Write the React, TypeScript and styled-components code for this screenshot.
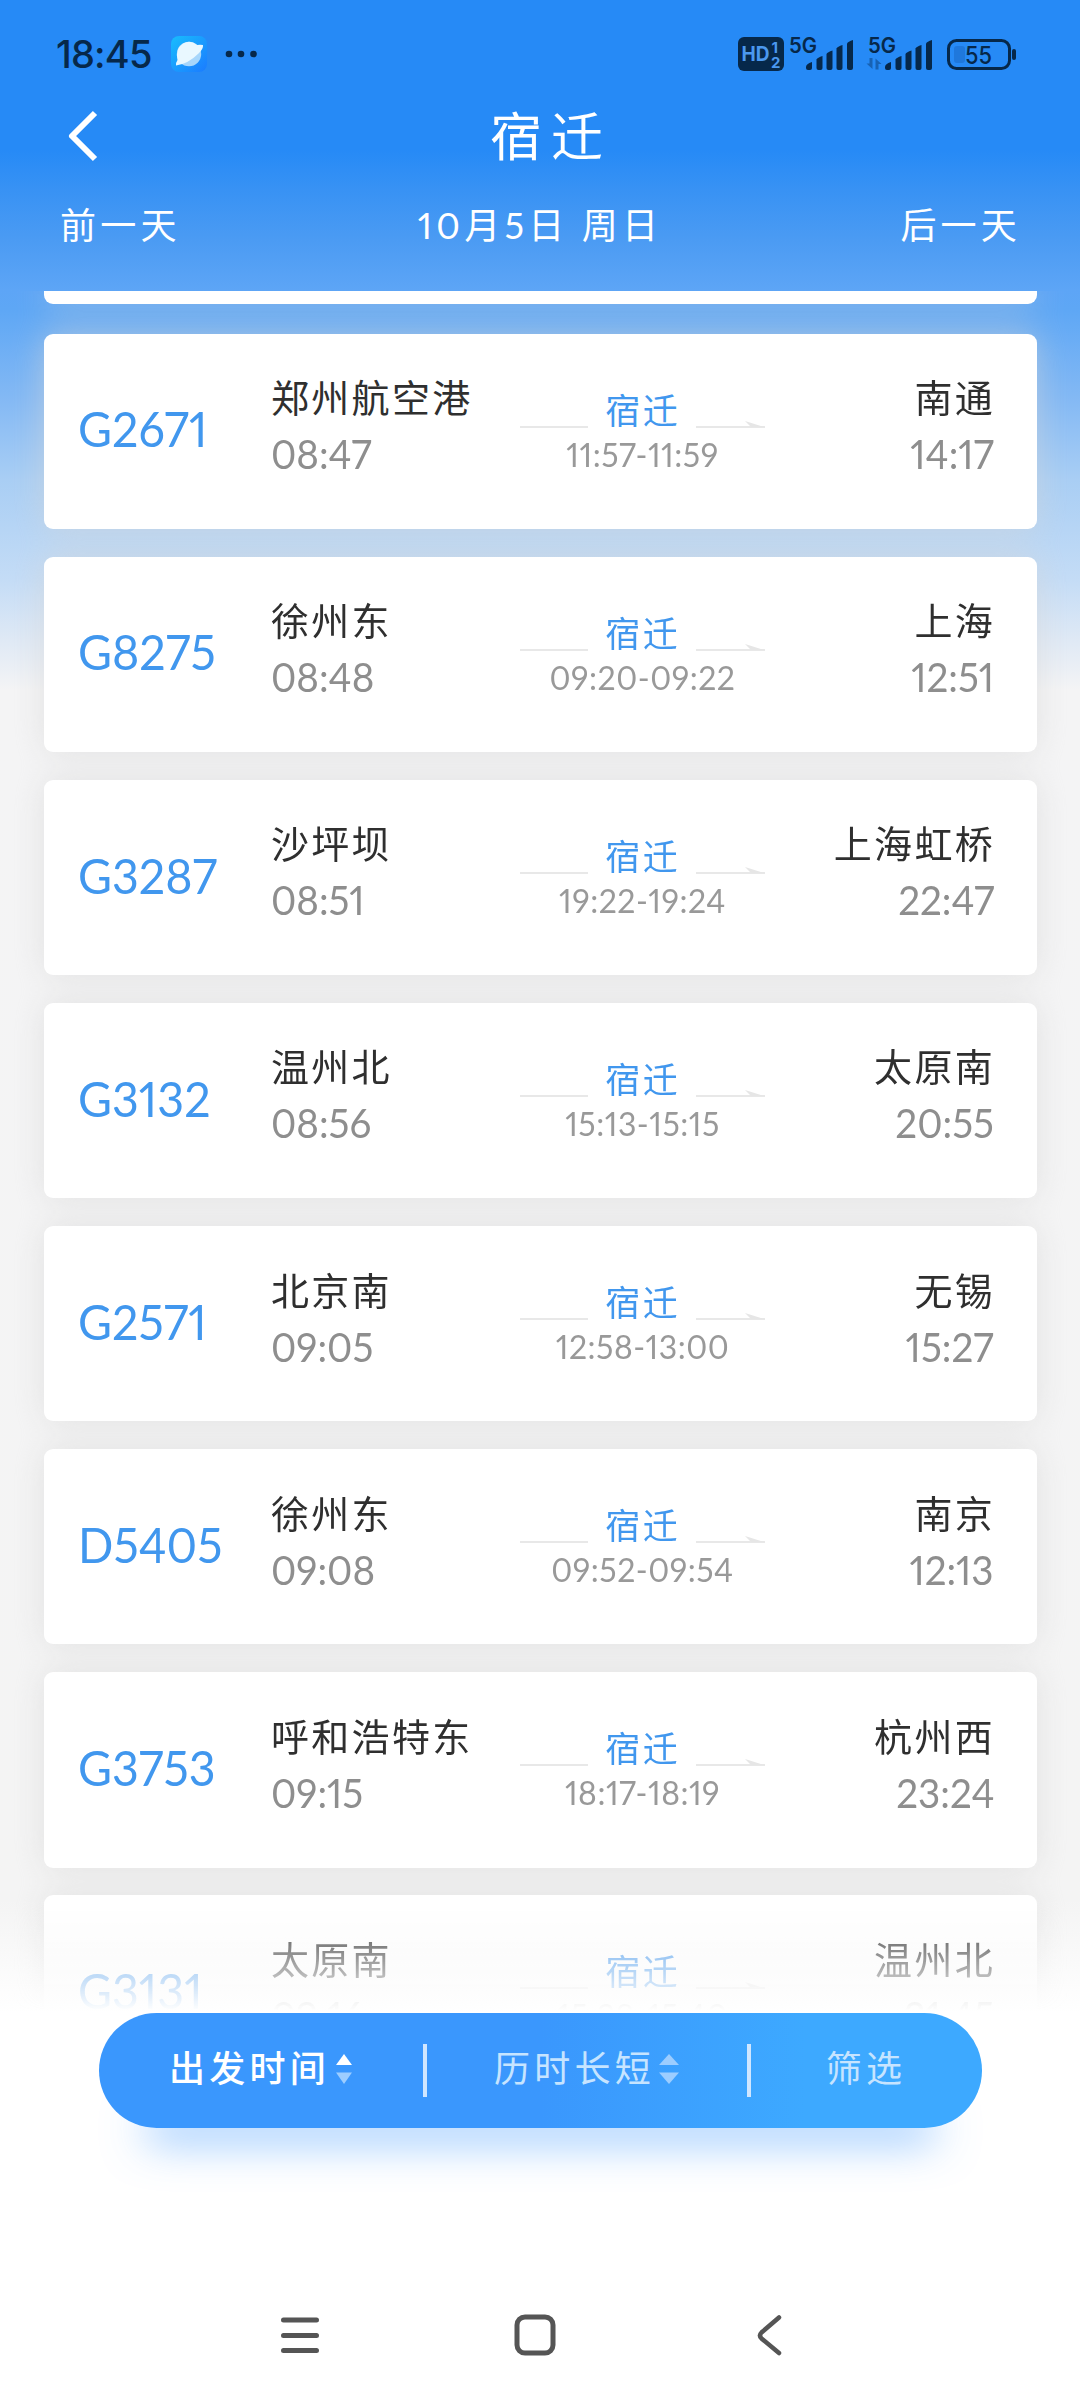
import React from "react";
import styled, { createGlobalStyle } from "styled-components";

const CJK = `"Noto Sans CJK SC", sans-serif`;

const GlobalStyle = createGlobalStyle`
  *, *::before, *::after { box-sizing: border-box; }
  body { margin: 0; background: #fff; }
  svg { display: block; flex: none; overflow: visible; }
`;

const Screen = styled.div`
  width: 1080px;
  height: 2400px;
  overflow: hidden;
  display: flex;
  flex-direction: column;
  font-family: Lato, ${CJK};
  font-feature-settings: "pnum" 1, "lnum" 1;
  background: linear-gradient(
    180deg,
    #268af6 0, #268af6 150px, #3892f4 190px, #4b9bf3 240px, #5da5f6 290px,
    #5ea7f5 310px, #84b9f4 400px, #a9cef4 480px, #c4dcf6 580px, #dfe9f5 640px, #f4f4f5 690px,
    #f4f4f4 1900px, #fff 2013px
  );
`;

const StatusBar = styled.div`
  display: flex;
  align-items: center;
  justify-content: space-between;
  height: 108px;
  padding: 0 63px 0 56px;
  color: #06284a;
`;

const StatusGroup = styled.div<{ $gap: number }>`
  display: flex;
  align-items: center;
  gap: ${(p) => p.$gap}px;
`;

const Clock = styled.span`
  width: 97px;
  font: 500 38px/1 Inter, sans-serif;
  letter-spacing: -0.8px;
  white-space: nowrap;
`;

const TitleBar = styled.div`
  display: grid;
  grid-template-columns: 1fr auto 1fr;
  align-items: center;
  height: 56px;
  padding: 0 65px;
`;

const Title = styled.h1`
  margin: -5px -9px 0 13px;
  font: 400 52px/56px ${CJK};
  letter-spacing: 9px;
  color: #fff;
`;

const DayBar = styled.div`
  display: grid;
  grid-template-columns: 1fr auto 1fr;
  align-items: center;
  height: 127px;
  padding: 0 60px 10px;
  color: #fff;
  font-size: 36px;
  letter-spacing: 4.2px;
`;

const Day = styled.span<{ $end?: boolean }>`
  justify-self: ${(p) => (p.$end ? "end" : "start")};
  margin-right: ${(p) => (p.$end ? "-1px" : "0")};
  white-space: pre;
`;

const Results = styled.div`
  height: 1722px;
  overflow: hidden;
  -webkit-mask-image: linear-gradient(#000 1610px, transparent 1720px);
  mask-image: linear-gradient(#000 1610px, transparent 1720px);
`;

const CardList = styled.div`
  display: flex;
  flex-direction: column;
  gap: 27.8px;
  padding: 0 43px 0 44px;
  filter: drop-shadow(0 0 16px rgba(214, 214, 214, 0.6));
`;

const CardTail = styled.div`
  height: 12.5px;
  margin-bottom: 2.4px;
  border-radius: 0 0 9px 9px;
  background: #fff;
`;

const Card = styled.div`
  flex: none;
  display: grid;
  grid-template-columns: 193px 249px 245px 1fr;
  height: 195.3px;
  padding: 0 43px 0 34px;
  border-radius: 9px;
  background: #fff;
`;

const TrainNo = styled.div`
  align-self: center;
  justify-self: start;
  padding-bottom: 4px;
  font-size: 48px;
  line-height: 56px;
  transform: scaleX(0.97);
  transform-origin: left;
  color: #4197ee;
`;

const Stop = styled.div<{ $end?: boolean }>`
  display: flex;
  flex-direction: column;
  align-items: ${(p) => (p.$end ? "flex-end" : "flex-start")};
  padding-top: 34.5px;
  white-space: nowrap;
`;

const Station = styled.div<{ $end?: boolean }>`
  font: 400 38px/56px ${CJK};
  letter-spacing: 2.3px;
  margin-right: ${(p) => (p.$end ? "-1px" : "0")};
  color: #2f2f2f;
`;

const Time = styled.div<{ $end?: boolean }>`
  margin-top: 2px;
  font-size: 41px;
  line-height: 56px;
  transform: scaleX(0.94);
  transform-origin: ${(p) => (p.$end ? "right" : "left")};
  color: #8e8e8e;
`;

const Via = styled.div`
  display: grid;
  grid-template-columns: 68px 1fr 69px;
  grid-template-rows: 50px 40px;
  padding-top: 50px;
  justify-items: center;
`;

const ViaName = styled.div`
  font: 400 35px/50px ${CJK};
  letter-spacing: 2.4px;
  margin-right: -1.4px;
  color: #4197ee;
`;

const ViaTime = styled.div`
  grid-column: 1 / -1;
  padding-top: 1px;
  font-size: 32px;
  line-height: 40px;
  letter-spacing: 0.5px;
  color: #999;
`;

const Bottom = styled.div`
  flex: 1;
  display: flex;
  flex-direction: column;
  align-items: center;
  background: #fff;
`;

const Pill = styled.div`
  display: grid;
  grid-template-columns: 324px 4px 320px 4px 1fr;
  align-items: center;
  width: 883px;
  height: 115px;
  border-radius: 58px;
  background: linear-gradient(90deg, #3a97fd 50%, #3da9ff 80%);
  box-shadow: 0 58px 44px -46px rgba(60, 150, 255, 0.68);
`;

const Sort = styled.div<{ $active?: boolean; $gap?: number }>`
  display: flex;
  align-items: center;
  justify-content: center;
  gap: ${(p) => p.$gap ?? 0}px;
  padding-bottom: 9px;
  font: ${(p) => (p.$active ? 500 : 400)} 36px/52px ${CJK};
  letter-spacing: 4.2px;
  color: ${(p) => (p.$active ? "#fff" : "#c6e4ff")};

  svg {
    margin-top: 6px;
  }
`;

const Separator = styled.div`
  height: 53px;
  background: #cfe6ff;
`;

const NavBar = styled.div`
  display: flex;
  align-items: center;
  justify-content: space-between;
  width: 502px;
  height: 42px;
  margin: 186px 19px 0 0;
`;

const HomeIcon = styled.svg`
  margin-right: 6px;
`;

type Row = [string, string, string, string, string, string];

const trains: Row[] = [
  ["G2671", "郑州航空港", "08:47", "11:57-11:59", "南通", "14:17"],
  ["G8275", "徐州东", "08:48", "09:20-09:22", "上海", "12:51"],
  ["G3287", "沙坪坝", "08:51", "19:22-19:24", "上海虹桥", "22:47"],
  ["G3132", "温州北", "08:56", "15:13-15:15", "太原南", "20:55"],
  ["G2571", "北京南", "09:05", "12:58-13:00", "无锡", "15:27"],
  ["D5405", "徐州东", "09:08", "09:52-09:54", "南京", "12:13"],
  ["G3753", "呼和浩特东", "09:15", "18:17-18:19", "杭州西", "23:24"],
  ["G3131", "太原南", "09:16", "15:38-15:40", "温州北", "21:45"],
];

const INK = "#06284a";

const Signal = ({ data }: { data?: boolean }) => (
  <svg width="65" height="36" viewBox="0 0 65 36">
    <text x="0" y="17" fontFamily="Inter, sans-serif" fontWeight="600" fontSize="21" textLength="28" lengthAdjust="spacingAndGlyphs" fill={INK}>5G</text>
    {data && (
      <g fill="#1762b4">
        <path d="M4.500 22v11L-1.500 27.500h3V22z" />
        <path d="M7.500 33.500V22.500l6 5.500h-3v5.500z" />
      </g>
    )}
    <g fill={INK}>
      <path d="M17 31q0-3 6-5v6q0 2-2 2h-2q-2 0-2-2z" />
      <path d="M27.500 23.500q1-2 6-3.500v12q0 2-2 2h-2q-2 0-2-2z" />
      <path d="M37.500 18q1-2 6-3.500v17.500q0 2-2 2h-2q-2 0-2-2z" />
      <path d="M47.500 12.500q1-2 6-3.500v23q0 2-2 2h-2q-2 0-2-2z" />
      <path d="M58 7.500q1-2 6-3.500v28q0 2-2 2h-2q-2 0-2-2z" />
    </g>
  </svg>
);

const Arrow = ({ head }: { head?: boolean }) => (
  <svg width={head ? 69 : 68} height="50">
    <rect y="42" width={head ? 69 : 68} height="2" fill="#e8e8e8" />
    {head && <path d="M49 37 68 43H55z" fill="#e6e6e6" />}
  </svg>
);

const Carets = ({ up, w }: { up: string; w: number }) => (
  <svg width={w} height="34" viewBox="0 0 20 34" preserveAspectRatio="none">
    <path d="M10 2 20 13H0z" fill={up} />
    <path d="M0 20.500H20L10 32z" fill="#9ccdff" />
  </svg>
);

export default function App() {
  return (
    <Screen>
      <GlobalStyle />
      <StatusBar>
        <StatusGroup $gap={18}>
          <Clock>18:45</Clock>
          <svg width="36" height="36" viewBox="0 0 36 36">
            <defs>
              <linearGradient id="app" x1="0" y1="0" x2="1" y2="1">
                <stop offset="0" stopColor="#18bdfd" />
                <stop offset="1" stopColor="#1b7bff" />
              </linearGradient>
            </defs>
            <rect width="36" height="36" rx="8" fill="url(#app)" />
            <circle cx="18" cy="18" r="12.200" fill="#a6d6fb" />
            <path d="M5 29.500Q4.500 27 6.500 24 4 13 12 7.500 19.500 3.500 26 9 29.500 8.500 32 9 32.500 13 27.500 17.500 17 28 5 29.500z" fill="#e9f8ff" />
          </svg>
          <svg width="33" height="8" viewBox="0 0 33 8" fill={INK}>
            <circle cx="4" cy="4" r="3.300" />
            <circle cx="16" cy="4" r="3.300" />
            <circle cx="28.500" cy="4" r="3.300" />
          </svg>
        </StatusGroup>
        <StatusGroup $gap={5.5}>
          <svg width="46" height="34" viewBox="0 0 46 34">
            <rect width="46" height="34" rx="6" fill={INK} />
            <g fill="#4b98ef" fontFamily="Inter, sans-serif" fontWeight="700">
              <text x="3.500" y="24" fontSize="20" textLength="28" lengthAdjust="spacingAndGlyphs">HD</text>
              <text x="33.500" y="15.500" fontSize="15">1</text>
              <text x="33" y="30.500" fontSize="15">2</text>
            </g>
          </svg>
          <StatusGroup $gap={14}>
            <Signal />
            <Signal data />
            <svg width="70" height="31" viewBox="0 0 70 31">
              <rect x="1.500" y="1.500" width="61" height="28" rx="8" fill="none" stroke={INK} strokeWidth="3" />
              <rect x="7" y="7" width="11" height="17" rx="3" fill="#1f78dc" />
              <rect x="65" y="10" width="4" height="11" rx="2" fill={INK} />
              <text x="18" y="24.500" fontFamily="Inter, sans-serif" fontWeight="500" fontSize="24.500" textLength="27" lengthAdjust="spacingAndGlyphs" fill={INK}>55</text>
            </svg>
          </StatusGroup>
        </StatusGroup>
      </StatusBar>
      <TitleBar>
        <svg width="36" height="56" viewBox="0 0 36 56">
          <path d="M30 5 7 28 30 51" fill="none" stroke="#fff" strokeWidth="6" strokeLinejoin="round" />
        </svg>
        <Title>宿迁</Title>
      </TitleBar>
      <DayBar>
        <Day>前一天</Day>
        <Day>10月5日 周日</Day>
        <Day $end>后一天</Day>
      </DayBar>
      <Results>
        <CardList>
          <CardTail />
          {trains.map(([no, from, dep, via, to, arr]) => (
            <Card key={no}>
              <TrainNo>{no}</TrainNo>
              <Stop>
                <Station>{from}</Station>
                <Time>{dep}</Time>
              </Stop>
              <Via>
                <Arrow />
                <ViaName>宿迁</ViaName>
                <Arrow head />
                <ViaTime>{via}</ViaTime>
              </Via>
              <Stop $end>
                <Station $end>{to}</Station>
                <Time $end>{arr}</Time>
              </Stop>
            </Card>
          ))}
        </CardList>
      </Results>
      <Bottom>
        <Pill>
          <Sort $active $gap={6}>出发时间<Carets up="#fff" w={16} /></Sort>
          <Separator />
          <Sort $gap={4}>历时长短<Carets up="#9ccdff" w={20} /></Sort>
          <Separator />
          <Sort>筛选</Sort>
        </Pill>
        <NavBar>
          <svg width="40" height="42" viewBox="0 0 40 42" stroke="#555" strokeWidth="5" strokeLinecap="round">
            <path d="M3.500 6H36.500M3.500 21.500H36.500M3.500 36.500H36.500" />
          </svg>
          <HomeIcon width="42" height="42" viewBox="0 0 42 42">
            <rect x="3" y="3" width="36" height="36" rx="8" fill="none" stroke="#555" strokeWidth="5" />
          </HomeIcon>
          <svg width="26" height="42" viewBox="0 0 26 42">
            <path d="M23 3.500 5.500 18.500Q2.500 21.500 5.500 24.500L23 39" fill="none" stroke="#555" strokeWidth="4.500" strokeLinecap="round" />
          </svg>
        </NavBar>
      </Bottom>
    </Screen>
  );
}
